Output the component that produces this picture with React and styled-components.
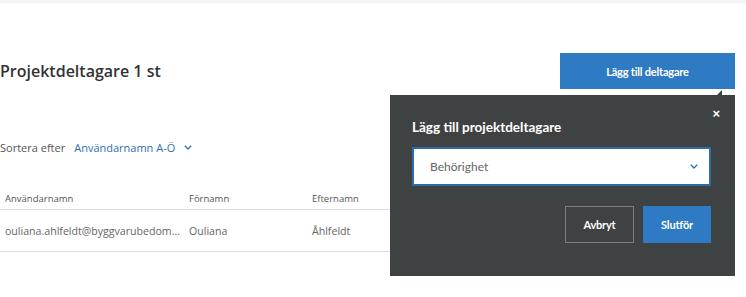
import styled, { createGlobalStyle } from "styled-components";

const GlobalStyle = createGlobalStyle`
  body {
    margin: 0;
    background: #fff;
    font-family: "Open Sans", "Liberation Sans", sans-serif;
  }
`;

const TopStrip = styled.div`
  height: 3px;
  background: #f3f3f3;
`;

const Page = styled.main`
  width: 746px;
  height: 294px;
  overflow: hidden;
  padding-right: 11px;
  box-sizing: border-box;
  display: flex;
  flex-direction: column;
`;

const HeaderRow = styled.div`
  display: flex;
  justify-content: space-between;
  align-items: center;
  margin-top: 50px;
`;

const Heading = styled.h1`
  margin: 0;
  font-size: 16px;
  font-weight: 600;
  color: #333;
`;

const AddWrap = styled.div`
  position: relative;
  display: flex;
`;

const PrimaryButton = styled.button`
  border: 0;
  background: #2f7bc3;
  color: #fff;
  font-family: "Lato", sans-serif;
  font-weight: 700;
  font-size: ${(p) => p.$size || 11}px;
  letter-spacing: -0.2px;
  width: ${(p) => p.$w}px;
  height: ${(p) => p.$h}px;
  cursor: pointer;
`;

const SortRow = styled.div`
  display: flex;
  align-items: center;
  margin-top: 51px;
  font-size: 11px;
`;

const SortLabel = styled.span`
  color: #555;
  font-weight: 400;
`;

const SortValue = styled.span`
  display: flex;
  align-items: center;
  gap: 9px;
  margin-left: 9px;
  color: #2f6fb3;
`;

const Table = styled.div`
  margin-top: 32px;
  width: 390px;
`;

const Row = styled.div`
  display: grid;
  grid-template-columns: 184px 123px 1fr;
  align-items: center;
  height: ${(p) => (p.$head ? 22 : 41)}px;
  padding-left: 5px;
  border-bottom: 1px solid #dedede;
  color: ${(p) => (p.$head ? "#555" : "#666")};
  font-size: ${(p) => (p.$head ? 9.5 : 10.6)}px;
  white-space: nowrap;
`;

const Cell = styled.span`
  overflow: hidden;
`;

const Popover = styled.div`
  position: absolute;
  top: 42px;
  right: 0;
  width: 345px;
  height: 181px;
  box-sizing: border-box;
  background: #3f4243;
  padding: 23px 24px 0 22px;
  font-family: "Lato", sans-serif;
  color: #fff;
  z-index: 5;

  &::before {
    content: "";
    position: absolute;
    top: -5px;
    right: 13px;
    border-left: 5px solid transparent;
    border-bottom: 5px solid #3f4243;
  }
`;

const Close = styled.button`
  position: absolute;
  top: 12px;
  right: 15px;
  border: 0;
  background: none;
  color: #fff;
  font-size: 13px;
  font-weight: 700;
  padding: 0;
  line-height: 1;
`;

const PopTitle = styled.h2`
  margin: 0;
  font-size: 13.5px;
  font-weight: 700;
  line-height: 18px;
`;

const Select = styled.div`
  margin-top: 11px;
  height: 39px;
  box-sizing: border-box;
  background: #fff;
  border: 2px solid #2d6ca8;
  display: flex;
  align-items: center;
  justify-content: space-between;
  padding: 0 11px 0 16px;
  color: #666;
  font-size: 12px;
`;

const Actions = styled.div`
  display: flex;
  justify-content: flex-end;
  gap: 9px;
  margin-top: 20px;
`;

const GhostButton = styled.button`
  width: 69px;
  height: 37px;
  background: transparent;
  border: 1px solid #7c7f80;
  color: #fff;
  font-family: "Lato", sans-serif;
  font-weight: 700;
  font-size: 11px;
  letter-spacing: -0.2px;
`;

const Chevron = ({ color, size = 8 }) => (
  <svg width={size} height={size * 0.6} viewBox="0 0 10 6">
    <path d="M1 1l4 4 4-4" fill="none" stroke={color} strokeWidth="1.6" />
  </svg>
);

export default function App() {
  return (
    <>
      <GlobalStyle />
      <TopStrip />
      <Page>
        <HeaderRow>
          <Heading>Projektdeltagare 1 st</Heading>
          <AddWrap>
            <PrimaryButton $w={175} $h={36}>Lägg till deltagare</PrimaryButton>
            <Popover>
              <Close>×</Close>
              <PopTitle>Lägg till projektdeltagare</PopTitle>
              <Select>
                <span>Behörighet</span>
                <Chevron color="#2d6ca8" />
              </Select>
              <Actions>
                <GhostButton>Avbryt</GhostButton>
                <PrimaryButton $w={68} $h={37}>Slutför</PrimaryButton>
              </Actions>
            </Popover>
          </AddWrap>
        </HeaderRow>
        <SortRow>
          <SortLabel>Sortera efter</SortLabel>
          <SortValue>
            Användarnamn A-Ö
            <Chevron color="#2f6fb3" />
          </SortValue>
        </SortRow>
        <Table>
          <Row $head>
            <Cell>Användarnamn</Cell>
            <Cell>Förnamn</Cell>
            <Cell>Efternamn</Cell>
          </Row>
          <Row>
            <Cell>ouliana.ahlfeldt@byggvarubedom...</Cell>
            <Cell>Ouliana</Cell>
            <Cell>Åhlfeldt</Cell>
          </Row>
        </Table>
      </Page>
    </>
  );
}
